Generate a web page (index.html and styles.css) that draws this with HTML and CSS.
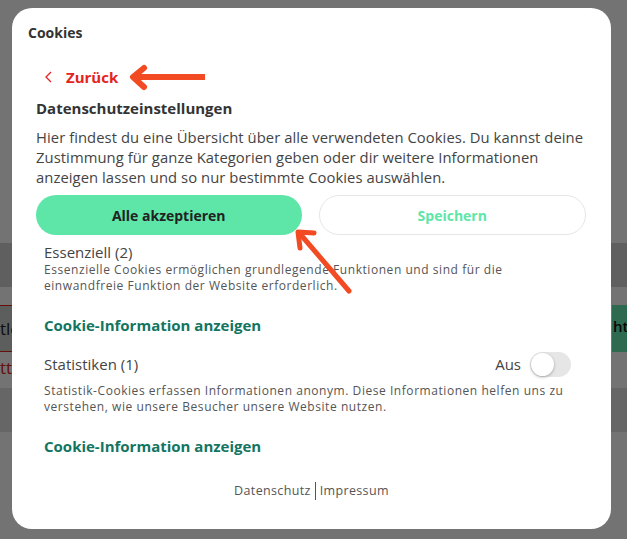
FILE: index.html
```html
<!DOCTYPE html>
<html lang="de">
  <head>
    <meta charset="UTF-8" />
    <meta name="viewport" content="width=device-width, initial-scale=1.0" />
    <title>Cookies</title>
    <link rel="stylesheet" href="styles.css">
  </head>
  <body>
    <!-- page behind the dialog -->
    <div class="page">
      <div class="band band-top"></div>
      <div class="band band-dark"></div>
      <div class="band band-light"></div>
      <div class="band band-form">
        <div class="field">tle</div>
        <div class="submit">ht</div>
      </div>
      <div class="band band-error"><span class="error">ttu</span></div>
      <div class="band band-grey"></div>
    </div>

    <div class="overlay">
      <div class="modal">
        <div class="modal-title">Cookies</div>

        <div class="settings">
          <div class="back">
            <svg class="chevron" width="8" height="12" viewBox="0 0 8 12">
              <path d="M7 1 L2 6 L7 11" fill="none" stroke="#e42320" stroke-width="1.3" />
            </svg>
            <span>Zurück</span>
          </div>

          <h2 class="settings-title">Datenschutzeinstellungen</h2>
          <p class="intro">
            Hier findest du eine Übersicht über alle verwendeten Cookies. Du kannst deine
            Zustimmung für ganze Kategorien geben oder dir weitere Informationen
            anzeigen lassen und so nur bestimmte Cookies auswählen.
          </p>

          <div class="actions">
            <button class="btn btn-accept">Alle akzeptieren</button>
            <button class="btn btn-save">Speichern</button>
          </div>

          <div class="category">
            <div class="category-head">
              <span class="category-name">Essenziell (2)</span>
            </div>
            <p class="category-text">
              Essenzielle Cookies ermöglichen grundlegende Funktionen und sind für die
              einwandfreie Funktion der Website erforderlich.
            </p>
            <a class="info-link">Cookie-Information anzeigen</a>
          </div>

          <div class="category category-stats">
            <div class="category-head">
              <span class="category-name">Statistiken (1)</span>
              <label class="switch">
                <span class="switch-label">Aus</span>
                <span class="switch-track"><span class="switch-knob"></span></span>
              </label>
            </div>
            <p class="category-text">
              Statistik-Cookies erfassen Informationen anonym. Diese Informationen helfen uns zu
              verstehen, wie unsere Besucher unsere Website nutzen.
            </p>
            <a class="info-link">Cookie-Information anzeigen</a>
          </div>

          <div class="footer-links">
            <a>Datenschutz</a><span class="sep"></span><a>Impressum</a>
          </div>
        </div>

        <!-- annotation arrows -->
        <svg class="mark mark-back" width="85" height="30" viewBox="0 0 85 30">
          <path d="M10 14 H80" stroke="#f24a22" stroke-width="6" />
          <path d="M19 5 L8 14 L19 24" fill="none" stroke="#f24a22" stroke-width="6" stroke-linecap="round" stroke-linejoin="round" />
        </svg>
        <svg class="mark mark-accept" width="70" height="80" viewBox="0 0 70 80">
          <path d="M9 12 L57 68" stroke="#f24a22" stroke-width="5" stroke-linecap="round" />
          <path d="M22 10 L6 9 L8 25" fill="none" stroke="#f24a22" stroke-width="5" stroke-linecap="round" stroke-linejoin="round" />
        </svg>
      </div>
    </div>
  </body>
</html>
```

FILE: styles.css
```css
/* General */
* {
  box-sizing: border-box;
}

body {
  margin: 0;
  font-family: "Open Sans", Arial, sans-serif;
  background: #fff;
  color: #333;
  overflow: hidden;
}

/* Page behind the dialog */
.page {
  height: 539px;
}

.band-top {
  height: 243px;
}

.band-dark {
  height: 44px;
  background: #d3d3d3;
}

.band-light {
  height: 18px;
}

.band-form {
  height: 47px;
  display: flex;
  justify-content: space-between;
}

.field {
  width: 40px;
  padding: 11px 0 0;
  background: #c9d1cc;
  border-top: 1px solid #e2231a;
  border-bottom: 1px solid #e2231a;
  font-size: 17px;
  color: #222;
}

.submit {
  width: 15px;
  padding: 11px 0 0 1px;
  background: #66ebb0;
  font-size: 15px;
  font-weight: 600;
  color: #111;
}

.band-error {
  height: 36px;
  padding: 4px 0 0;
}

.error {
  font-size: 17px;
  color: #e2231a;
}

.band-grey {
  height: 44px;
  background: #e2e2e2;
}

/* Overlay + dialog */
.overlay {
  position: fixed;
  inset: 0;
  background: rgba(0, 0, 0, 0.55);
  padding: 8px 16px 10px 12px;
}

.modal {
  position: relative;
  height: 100%;
  background: #fff;
  border-radius: 20px;
  padding: 15px 16px 0;
}

.modal-title {
  font-size: 14px;
  line-height: 20px;
  font-weight: 700;
  color: #333;
}

.settings {
  padding: 24px 8px 0;
}

.back {
  display: flex;
  align-items: center;
  gap: 14px;
  padding-left: 8px;
  height: 20px;
  color: #e42320;
  font-size: 15px;
  font-weight: 700;
}

.settings-title {
  margin: 11px 0 0;
  font-size: 15px;
  line-height: 20px;
  font-weight: 700;
  color: #333;
}

.intro {
  margin: 9px 0 0;
  font-size: 14.8px;
  line-height: 20px;
  letter-spacing: 0.06px;
  color: #444;
}

/* Buttons */
.actions {
  display: flex;
  gap: 17px;
  margin-top: 8px;
  padding-right: 1px;
}

.btn {
  flex: 1;
  height: 40px;
  border-radius: 20px;
  font-family: inherit;
  font-size: 14px;
  font-weight: 700;
}

.btn-accept {
  background: #5de6a8;
  border: none;
  color: #222;
}

.btn-save {
  background: #fff;
  border: 1px solid #e6e6e6;
  color: #5de6a8;
}

/* Categories */
.category {
  padding: 7px 16px 0 8px;
}

.category-stats {
  padding-top: 19px;
}

.category-head {
  display: flex;
  justify-content: space-between;
  align-items: center;
  height: 20px;
}

.category-name {
  font-size: 15px;
  color: #444;
}

.category-text {
  margin: 0;
  font-size: 12px;
  line-height: 16px;
  letter-spacing: 0.55px;
  color: #555;
}

.category-stats .category-text {
  margin-top: 9px;
}

.info-link {
  display: block;
  margin-top: 21px;
  font-size: 15px;
  line-height: 20px;
  font-weight: 700;
  color: #137561;
}

/* Toggle */
.switch {
  display: flex;
  align-items: center;
  gap: 9px;
  font-size: 15px;
  color: #444;
}

.switch-track {
  display: block;
  width: 41px;
  height: 25px;
  border-radius: 13px;
  background: #e6e6e6;
  padding: 1px;
}

.switch-knob {
  display: block;
  width: 23px;
  height: 23px;
  border-radius: 50%;
  background: #fff;
  box-shadow: 0 1px 3px rgba(0, 0, 0, 0.3);
}

/* Footer */
.footer-links {
  display: flex;
  justify-content: center;
  align-items: center;
  margin-top: 26px;
  font-size: 12.5px;
  line-height: 16px;
  letter-spacing: 0.35px;
  color: #555;
}

.sep {
  width: 1px;
  height: 18px;
  margin: 0 4px;
  background: #555;
}

/* Annotation arrows */
.mark {
  position: absolute;
}

.mark-back {
  left: 113px;
  top: 55px;
}

.mark-accept {
  left: 280px;
  top: 215px;
}
```
